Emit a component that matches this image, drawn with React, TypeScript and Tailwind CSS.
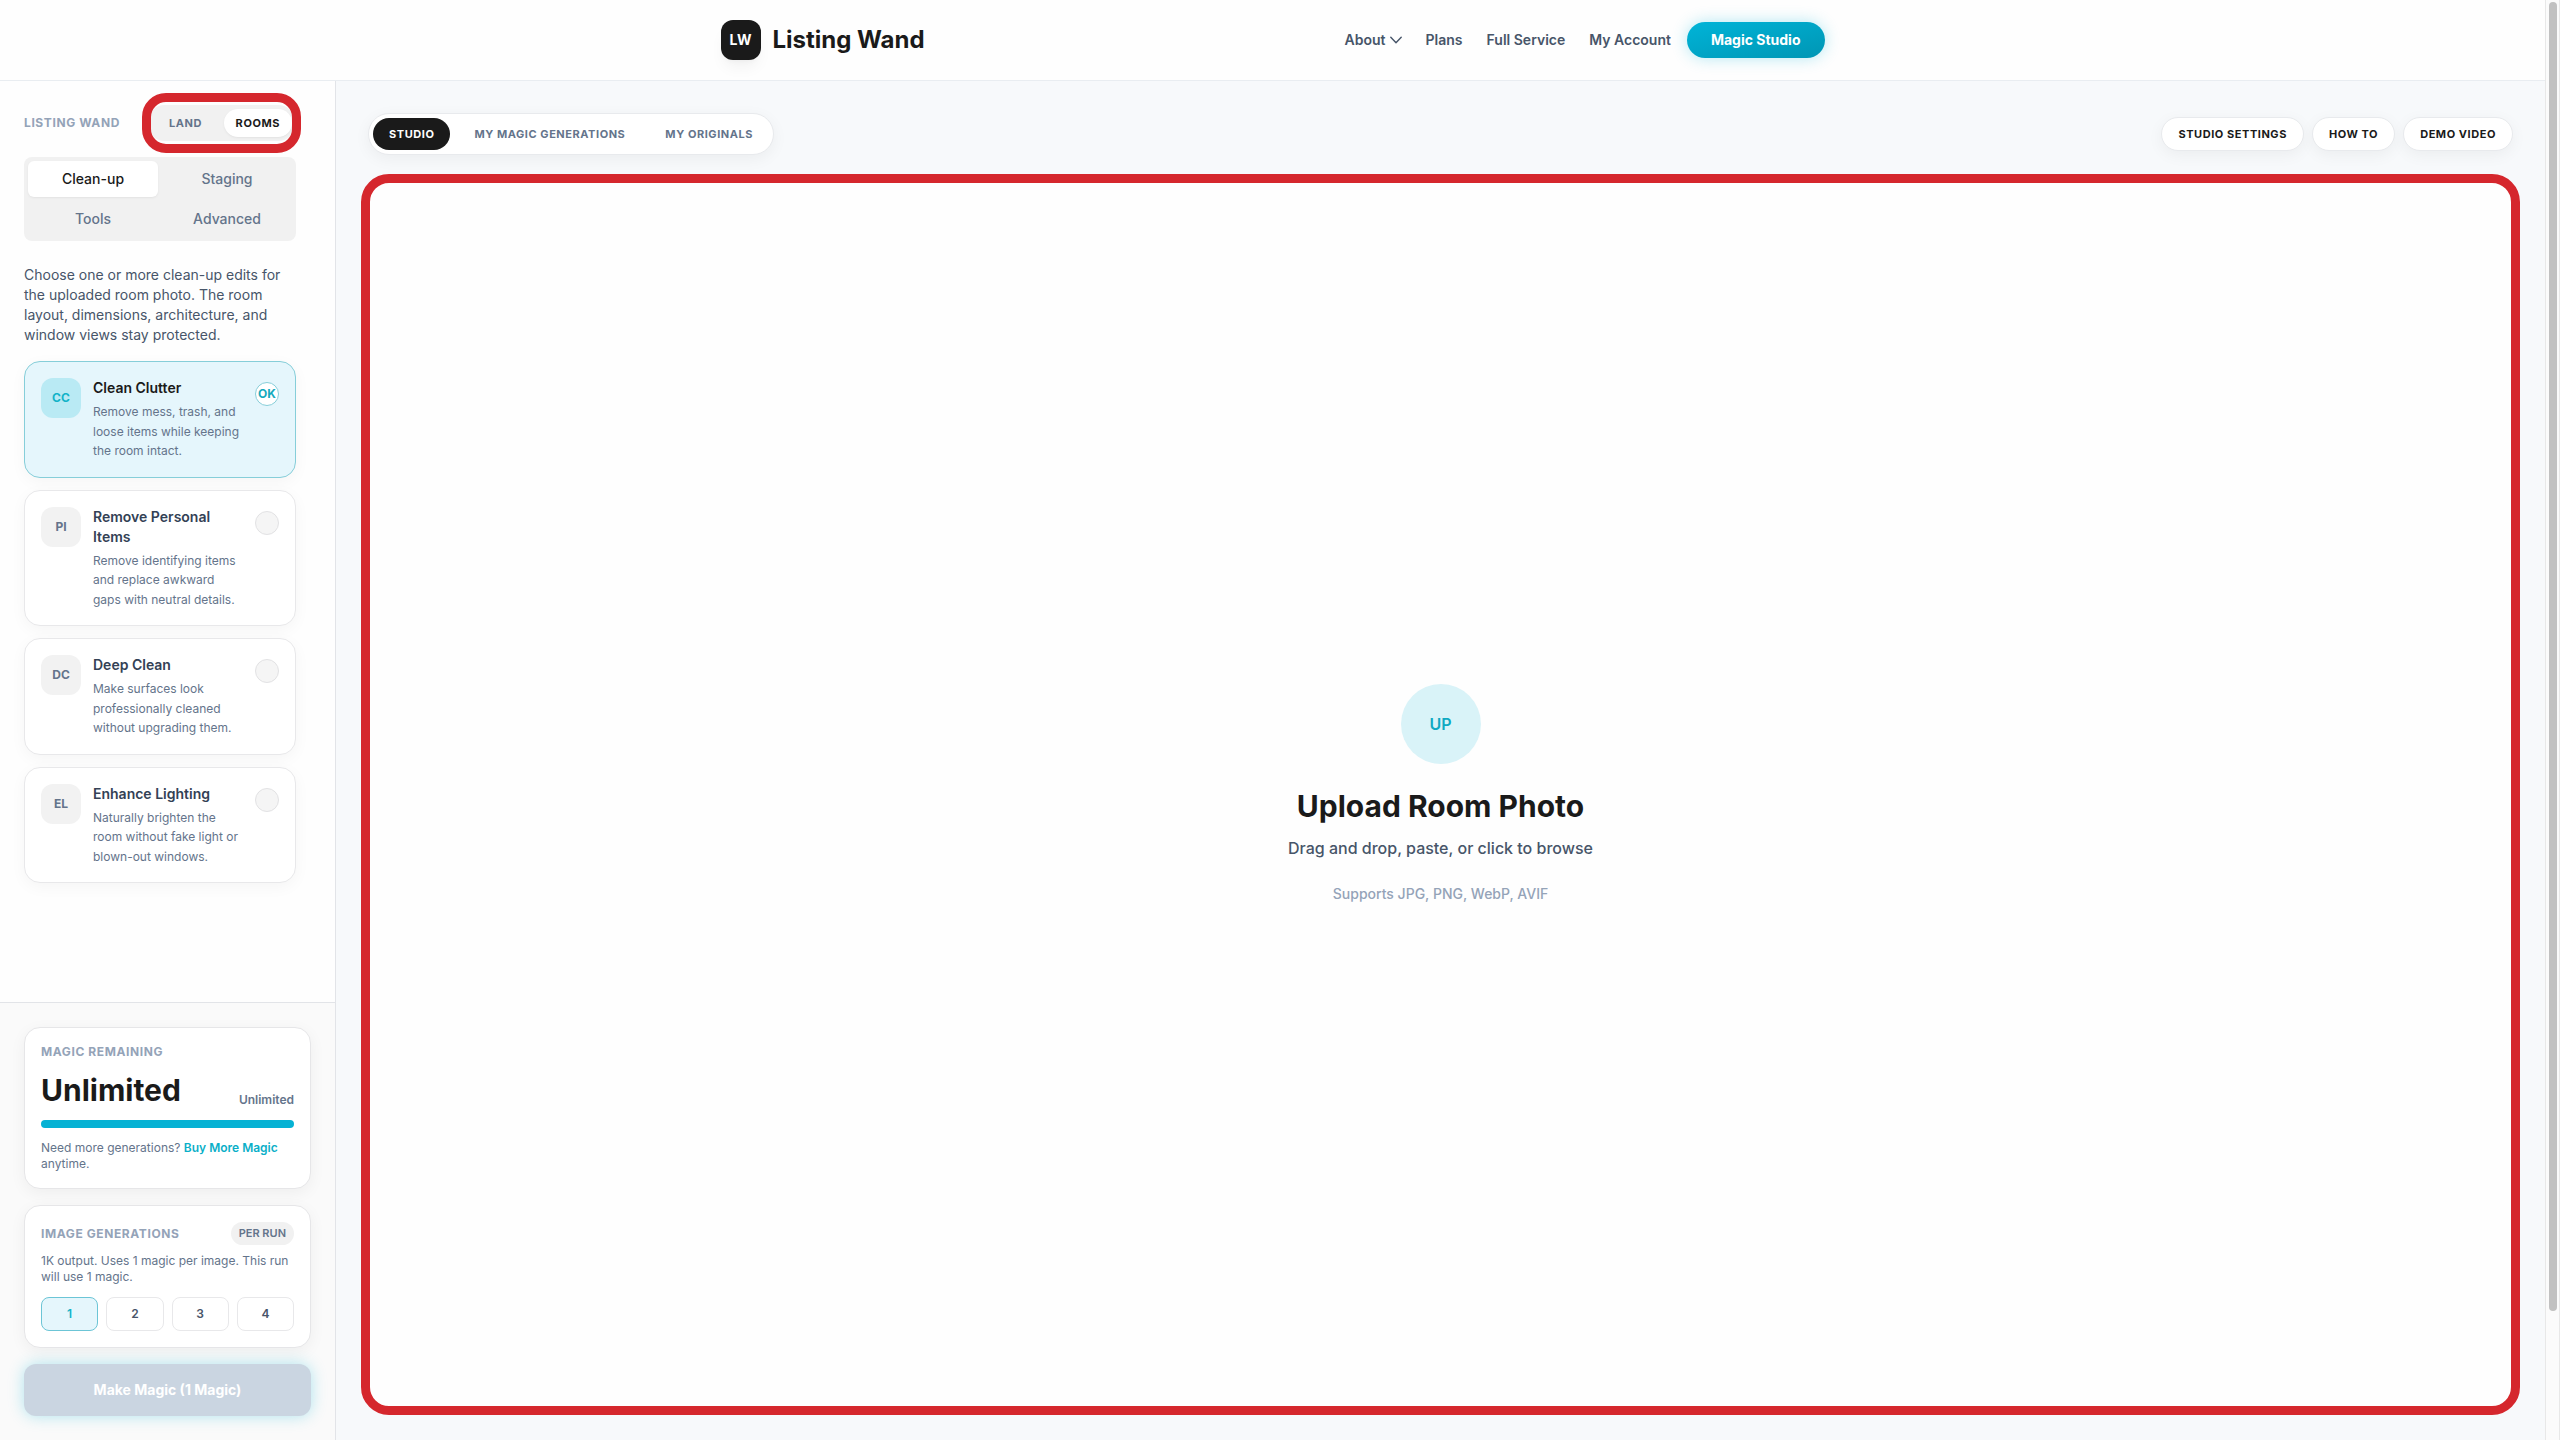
import { useState } from "react"
import clsx from "clsx"

const edits = [
    { code: "CC", title: "Clean Clutter", text: "Remove mess, trash, and loose items while keeping the room intact." },
    { code: "PI", title: "Remove Personal Items", text: "Remove identifying items and replace awkward gaps with neutral details." },
    { code: "DC", title: "Deep Clean", text: "Make surfaces look professionally cleaned without upgrading them." },
    { code: "EL", title: "Enhance Lighting", text: "Naturally brighten the room without fake light or blown-out windows." },
]

function Header() {
    return (
        <header className="border-b border-[#e9edf1] bg-[#fefefe]">
            <div className="mx-auto flex h-20 max-w-6xl items-center justify-between px-6">
                <a href="#home" className="flex items-center gap-3">
                    <span className="flex size-10 items-center justify-center rounded-xl bg-[#1a1a1a] text-sm font-bold text-white shadow-lg shadow-black/5">
                        LW
                    </span>
                    <span className="text-2xl font-bold text-[#1a1a1a]">Listing Wand</span>
                </a>
                <nav className="flex items-center text-sm font-semibold text-[#475569]">
                    <button type="button" className="flex items-center gap-1 px-3">
                        About
                        <svg width="12" height="8" viewBox="0 0 12 8" fill="none" stroke="currentColor" strokeWidth="1.4" strokeLinecap="round" strokeLinejoin="round">
                            <path d="M.8 1.2 6 6.8 11.2 1.2" />
                        </svg>
                    </button>
                    <a href="#plans" className="px-3">Plans</a>
                    <a href="#full-service" className="px-3">Full Service</a>
                    <a href="#account" className="px-3">My Account</a>
                    <a
                        href="#studio"
                        className="ml-1 rounded-full bg-linear-to-br from-[#00b4d8] to-[#0096b4] px-6 py-2 font-bold text-white shadow-[0_0_16px_rgba(0,180,216,0.3)]"
                    >
                        Magic Studio
                    </a>
                </nav>
            </div>
        </header>
    )
}

function Sidebar() {
    const [mode, setMode] = useState("Rooms")
    const [tab, setTab] = useState("Clean-up")
    const [selected, setSelected] = useState<string[]>(["CC"])
    const [count, setCount] = useState(1)

    function toggle(code: string) {
        setSelected(selected.includes(code) ? selected.filter((c) => c !== code) : [...selected, code])
    }

    return (
        <aside className="flex w-[336px] shrink-0 flex-col border-r border-[#e2e4e8] bg-[#fefefe]">
            <div className="flex-1 pt-6 pr-[39px] pl-6">
                <div className="mb-4 flex items-center justify-between">
                    <h2 className="text-xs font-bold tracking-wider text-[#94a3b8] uppercase">Listing Wand</h2>
                    <div className="relative">
                        <div className="grid grid-cols-2 gap-1 rounded-full bg-[#f1f1f1] p-1">
                            {["Land", "Rooms"].map((m) => (
                                <button
                                    key={m}
                                    type="button"
                                    onClick={() => setMode(m)}
                                    className={clsx(
                                        "rounded-full px-3 py-1.5 text-[11px] leading-4 font-bold tracking-wider uppercase",
                                        m === mode ? "bg-white text-[#1a1a1a] shadow-sm shadow-black/5" : "text-[#64748b]"
                                    )}
                                >
                                    {m}
                                </button>
                            ))}
                        </div>
                        <div className="pointer-events-none absolute -inset-x-[5px] -inset-y-3 rounded-3xl border-9 border-[#d5272d]" />
                    </div>
                </div>

                <div className="grid grid-cols-2 gap-1 rounded-lg bg-[#f1f1f1] p-1">
                    {["Clean-up", "Staging", "Tools", "Advanced"].map((t) => (
                        <button
                            key={t}
                            type="button"
                            onClick={() => setTab(t)}
                            className={clsx(
                                "rounded-md py-2 text-sm font-medium",
                                t === tab ? "bg-white text-[#1a1a1a] shadow-sm shadow-black/5" : "text-[#64748b]"
                            )}
                        >
                            {t}
                        </button>
                    ))}
                </div>

                <p className="mt-6 mb-4 text-sm text-[#475569]">
                    Choose one or more clean-up edits for the uploaded room photo. The room layout, dimensions,
                    architecture, and window views stay protected.
                </p>

                <div className="flex flex-col gap-3">
                    {edits.map((edit) => {
                        const on = selected.includes(edit.code)
                        return (
                            <button
                                key={edit.code}
                                type="button"
                                aria-pressed={on}
                                onClick={() => toggle(edit.code)}
                                className={clsx(
                                    "flex items-start gap-3 rounded-2xl border p-4 text-left shadow-[0_4px_16px_rgba(0,0,0,0.04)]",
                                    on ? "border-[#86ced9] bg-[#e5f6fc]" : "border-[#e8e8ea] bg-white"
                                )}
                            >
                                <span
                                    className={clsx(
                                        "flex size-10 shrink-0 items-center justify-center rounded-xl text-xs font-bold",
                                        on ? "bg-[#b9eaf4] text-[#14b3c8]" : "bg-[#f2f2f2] text-[#64748b]"
                                    )}
                                >
                                    {edit.code}
                                </span>
                                <span className="flex flex-1 flex-col gap-1">
                                    <span className={clsx("text-sm font-semibold", on ? "text-[#1a1a1a]" : "text-[#334155]")}>
                                        {edit.title}
                                    </span>
                                    <span className="text-xs leading-relaxed text-[#64748b]">{edit.text}</span>
                                </span>
                                <span
                                    className={clsx(
                                        "mt-1 flex size-6 shrink-0 items-center justify-center rounded-full border text-xs font-bold",
                                        on ? "border-[#86ced9] bg-white text-[#14a9bd]" : "border-[#e2e2e4] bg-[#f5f5f5]"
                                    )}
                                >
                                    {on && "OK"}
                                </span>
                            </button>
                        )
                    })}
                </div>
            </div>

            <div className="flex flex-col gap-4 border-t border-[#e2e4e8] bg-[#fafafa] p-6">
                <section className="rounded-2xl border border-[#e6e6e8] bg-white p-4 shadow-[0_4px_16px_rgba(0,0,0,0.05)]">
                    <h3 className="text-xs font-bold tracking-wider text-[#94a3b8] uppercase">Magic Remaining</h3>
                    <div className="my-3 flex items-end justify-between">
                        <span className="text-3xl font-bold text-[#1a1a1a]">Unlimited</span>
                        <span className="text-xs font-semibold text-[#64748b]">Unlimited</span>
                    </div>
                    <div className="h-2 rounded-full bg-[#06b2d4]" />
                    <p className="mt-3 text-xs text-[#64748b]">
                        Need more generations?{" "}
                        <a href="#buy" className="font-semibold text-[#0aafc8]">Buy More Magic</a>
                        <br />
                        anytime.
                    </p>
                </section>

                <section className="rounded-2xl border border-[#e6e6e8] bg-white p-4 shadow-[0_4px_16px_rgba(0,0,0,0.05)]">
                    <div className="flex items-center justify-between">
                        <h3 className="text-xs font-bold tracking-wider text-[#94a3b8] uppercase">Image Generations</h3>
                        <span className="rounded-full bg-[#f1f1f1] px-2 py-1 text-[11px] leading-[15px] font-semibold text-[#64748b]">
                            PER RUN
                        </span>
                    </div>
                    <p className="mt-2 text-xs text-[#64748b]">
                        {`1K output. Uses 1 magic per image. This run will use ${count} magic.`}
                    </p>
                    <div className="mt-3 grid grid-cols-4 gap-2">
                        {[1, 2, 3, 4].map((n) => (
                            <button
                                key={n}
                                type="button"
                                onClick={() => setCount(n)}
                                className={clsx(
                                    "rounded-lg border py-2 text-xs font-semibold",
                                    n === count ? "border-[#6cc5d6] bg-[#e5f6fc] text-[#14b3c8]" : "border-[#e8e8ea] bg-white text-[#475569]"
                                )}
                            >
                                {n}
                            </button>
                        ))}
                    </div>
                </section>

                <button
                    type="button"
                    className="rounded-xl bg-[#cad5e1] py-4 text-sm font-bold text-white shadow-[0_0_16px_rgba(0,180,216,0.3)]"
                >
                    {`Make Magic (${count} Magic)`}
                </button>
            </div>
        </aside>
    )
}

function Studio() {
    const [view, setView] = useState("Studio")

    return (
        <main className="flex min-w-0 flex-1 flex-col gap-6 bg-[#f7f9fb] p-8">
            <div className="flex items-center justify-between">
                <div className="flex gap-2 rounded-full border border-[#e8eaed] bg-white p-1 shadow-[0_4px_16px_rgba(0,0,0,0.05)]">
                    {["Studio", "My Magic Generations", "My Originals"].map((v) => (
                        <button
                            key={v}
                            type="button"
                            onClick={() => setView(v)}
                            className={clsx(
                                "rounded-full px-4 py-2 text-[11px] leading-4 font-bold tracking-wider uppercase",
                                v === view ? "bg-[#1a1a1a] text-white" : "text-[#64748b]"
                            )}
                        >
                            {v}
                        </button>
                    ))}
                </div>
                <div className="flex gap-2">
                    {["Studio Settings", "How To", "Demo Video"].map((label) => (
                        <button
                            key={label}
                            type="button"
                            className="rounded-full border border-[#e8eaed] bg-white px-4 py-2 text-[11px] leading-4 font-bold tracking-wider text-[#1a1a1a] uppercase shadow-[0_4px_16px_rgba(0,0,0,0.05)]"
                        >
                            {label}
                        </button>
                    ))}
                </div>
            </div>

            <div className="relative flex flex-1">
                <button type="button" className="flex flex-1 flex-col items-center justify-center rounded-3xl bg-[#fefefe]">
                    <span className="flex size-20 items-center justify-center rounded-full bg-[#d9f3f8] font-semibold text-[#0fa9c2]">
                        UP
                    </span>
                    <span className="mt-6 text-3xl font-bold text-[#1a1a1a]">Upload Room Photo</span>
                    <span className="mt-3 font-medium text-[#475569]">Drag and drop, paste, or click to browse</span>
                    <span className="mt-6 text-sm font-medium text-[#94a3b8]">Supports JPG, PNG, WebP, AVIF</span>
                </button>
                <div className="pointer-events-none absolute -inset-x-[7px] -top-[5px] -bottom-[7px] rounded-[28px] border-9 border-[#d5272d]" />
            </div>
        </main>
    )
}

function App() {
    return (
        <div className="flex min-h-screen font-[Inter,sans-serif]">
            <div className="flex min-w-0 flex-1 flex-col">
                <Header />
                <div className="flex flex-1">
                    <Sidebar />
                    <Studio />
                </div>
            </div>
            {/* scroll track */}
            <div className="flex w-[15px] flex-col border-x border-[#e8e8e8] bg-[#fbfbfb] px-[3px] pt-0.5">
                <div className="h-[91%] w-2 rounded-full bg-[#c1c1c1]" />
            </div>
        </div>
    )
}

export default App
